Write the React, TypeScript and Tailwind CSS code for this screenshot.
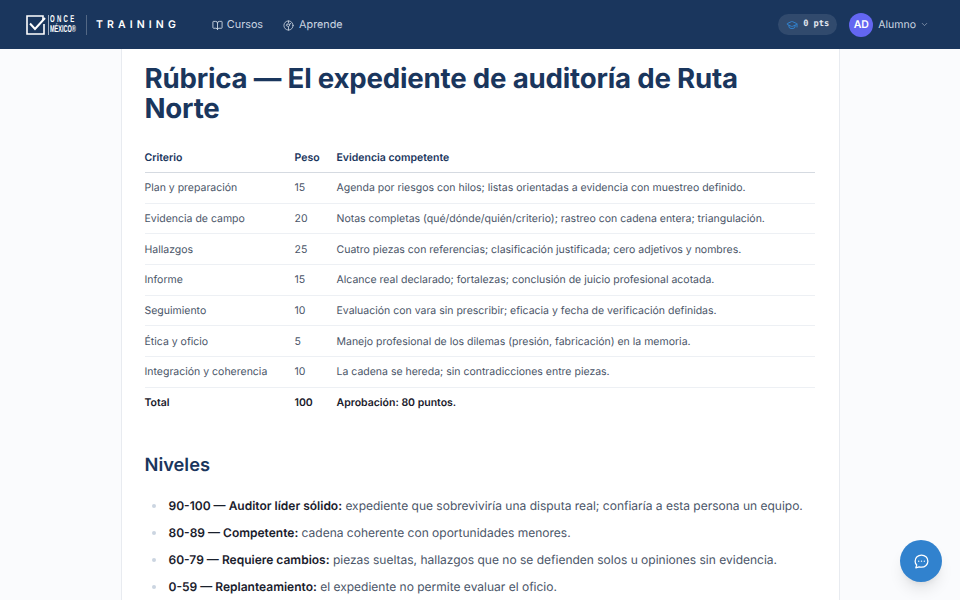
import { BookOpen, ChevronDown, GraduationCap } from "lucide-react";

const rows = [
  ["Plan y preparación", "15", "Agenda por riesgos con hilos; listas orientadas a evidencia con muestreo definido."],
  ["Evidencia de campo", "20", "Notas completas (qué/dónde/quién/criterio); rastreo con cadena entera; triangulación."],
  ["Hallazgos", "25", "Cuatro piezas con referencias; clasificación justificada; cero adjetivos y nombres."],
  ["Informe", "15", "Alcance real declarado; fortalezas; conclusión de juicio profesional acotada."],
  ["Seguimiento", "10", "Evaluación con vara sin prescribir; eficacia y fecha de verificación definidas."],
  ["Ética y oficio", "5", "Manejo profesional de los dilemas (presión, fabricación) en la memoria."],
  ["Integración y coherencia", "10", "La cadena se hereda; sin contradicciones entre piezas."],
];

const levels = [
  ["90-100 — Auditor líder sólido:", "expediente que sobreviviría una disputa real; confiaría a esta persona un equipo."],
  ["80-89 — Competente:", "cadena coherente con oportunidades menores."],
  ["60-79 — Requiere cambios:", "piezas sueltas, hallazgos que no se defienden solos u opiniones sin evidencia."],
  ["0-59 — Replanteamiento:", "el expediente no permite evaluar el oficio."],
];

const Logo = () => (
  <div className="flex items-center">
    <svg viewBox="0 0 20 20" width="20" height="20" fill="none" className="text-white">
      <path d="M17 5.5V1H1v18h17V9" stroke="currentColor" strokeWidth="1.6" />
      <path d="M4 8.5l5 5.5L19 3" stroke="currentColor" strokeWidth="2" />
    </svg>
    <div className="ml-[2px] flex h-[20px] w-[32px] flex-col border-l border-white/60 pl-[1px] font-['Liberation_Sans',sans-serif] text-[10px] font-bold leading-[10px] text-white">
      <div className="origin-left scale-x-[0.6] whitespace-nowrap tracking-[3.800px]">ONCE</div>
      <div className="origin-left scale-x-[0.55] whitespace-nowrap">MÉXICO®</div>
    </div>
    <div className="ml-[6px] h-[20px] w-px bg-white/25" />
    <div className="ml-[9px] whitespace-nowrap text-[10.500px] font-semibold tracking-[4.100px] text-white">TRAINING</div>
  </div>
);

const GlobeIcon = () => (
  <svg viewBox="0 0 24 24" width="11" height="11" fill="none" stroke="currentColor" strokeWidth="1.8" strokeLinecap="round" strokeLinejoin="round">
    <circle cx="12" cy="12" r="10" />
    <path d="M12 2v4M9 9h6l-1 4-2 1v8M9 9l-2 3 4 2M15 9l2-2" />
  </svg>
);

const ChatIcon = () => (
  <svg viewBox="0 0 24 24" width="17" height="17" fill="none" stroke="white" strokeWidth="1.8" strokeLinecap="round" strokeLinejoin="round">
    <path d="M12 3c5 0 9 3.600 9 8.500S17 20 12 20c-1.200 0-2.300-.2-3.300-.5L4 21l1.200-4.200C3.800 15.400 3 13.600 3 11.500 3 6.600 7 3 12 3z" />
    <path d="M8 11.500h.01M12 11.500h.01M16 11.500h.01" strokeWidth="2" />
  </svg>
);

const App = () => {
  return (
    <div className="relative h-[600px] w-[960px] overflow-hidden bg-[#fafbfd] font-['Inter',sans-serif] [text-rendering:geometricPrecision]">
      <header className="flex h-[49px] items-center justify-between bg-[#1a365d] pl-[26px] pr-[31px]">
        <div className="flex items-center">
          <Logo />
          <nav className="ml-[32px] flex items-center gap-[20px] pt-[1px] text-[10.800px] text-[#cbd5e1]">
            <div className="flex items-center gap-[4px]">
              <BookOpen size={11} />
              <span>Cursos</span>
            </div>
            <div className="flex items-center gap-[5px]">
              <GlobeIcon />
              <span>Aprende</span>
            </div>
          </nav>
        </div>
        <div className="flex items-center">
          <div className="flex h-[21px] items-center gap-[5px] rounded-full bg-white/10 px-[8px] font-['DejaVu_Sans_Mono',monospace] text-[8.700px] font-bold text-[#e2e8f0]">
            <GraduationCap size={12} className="text-[#3182ce]" />
            <span>0 pts</span>
          </div>
          <div className="ml-[12px] flex h-[24px] w-[24px] items-center justify-center rounded-full bg-[#6366f1] text-[10.500px] font-semibold text-white">
            AD
          </div>
          <span className="ml-[5px] text-[10.500px] text-[#cbd5e1]">Alumno</span>
          <ChevronDown size={9} className="ml-[4px] text-[#94a3b8]" />
        </div>
      </header>

      <main className="mx-auto h-[551px] w-[719px] overflow-hidden border-x border-[#e8ebf0] bg-white px-[23px] pt-[14px]">
        <h1 className="text-[27.650px] font-bold leading-[30px] tracking-[-0.2px] text-[#1a365d]">
          Rúbrica — El expediente de auditoría de Ruta Norte
        </h1>

        <table className="mt-[18.400px] w-[670px] border-collapse text-[10.500px] text-[#4a5568]">
          <thead>
            <tr className="border-b border-[#d5dae1] text-left font-semibold text-[#1a365d]">
              <th className="h-[31px] w-[150px] pt-[3px] font-semibold">Criterio</th>
              <th className="w-[42px] pt-[3px] font-semibold">Peso</th>
              <th className="pt-[3px] font-semibold">Evidencia competente</th>
            </tr>
          </thead>
          <tbody>
            {rows.map((r) => (
              <tr key={r[0]} className="border-b border-[#edf0f4]">
                <td className="h-[30.700px] pt-[1px]">{r[0]}</td>
                <td className="pt-[1px]">{r[1]}</td>
                <td className="pt-[1px]">{r[2]}</td>
              </tr>
            ))}
            <tr className="font-semibold text-[#1a202c]">
              <td className="h-[30.700px]">Total</td>
              <td>100</td>
              <td>Aprobación: 80 puntos.</td>
            </tr>
          </tbody>
        </table>

        <h2 className="mt-[33px] text-[18.300px] font-semibold leading-[28px] text-[#1a365d]">Niveles</h2>

        <ul className="mt-[17px] flex flex-col gap-[7px] pl-[24px] text-[12px] leading-[20px] text-[#4a5568]">
          {levels.map((l) => (
            <li key={l[0]} className="relative whitespace-nowrap">
              <span className="absolute left-[-17px] top-[8px] h-[4px] w-[4px] rounded-full bg-[#cbd5e1]" />
              <strong className="font-semibold text-[#1a202c]">{l[0]}</strong> {l[1]}
            </li>
          ))}
        </ul>
      </main>

      <button className="absolute bottom-[18px] right-[18px] flex h-[42px] w-[42px] items-center justify-center rounded-full bg-[#3182ce] shadow-lg">
        <ChatIcon />
      </button>
    </div>
  );
};

export default App;
